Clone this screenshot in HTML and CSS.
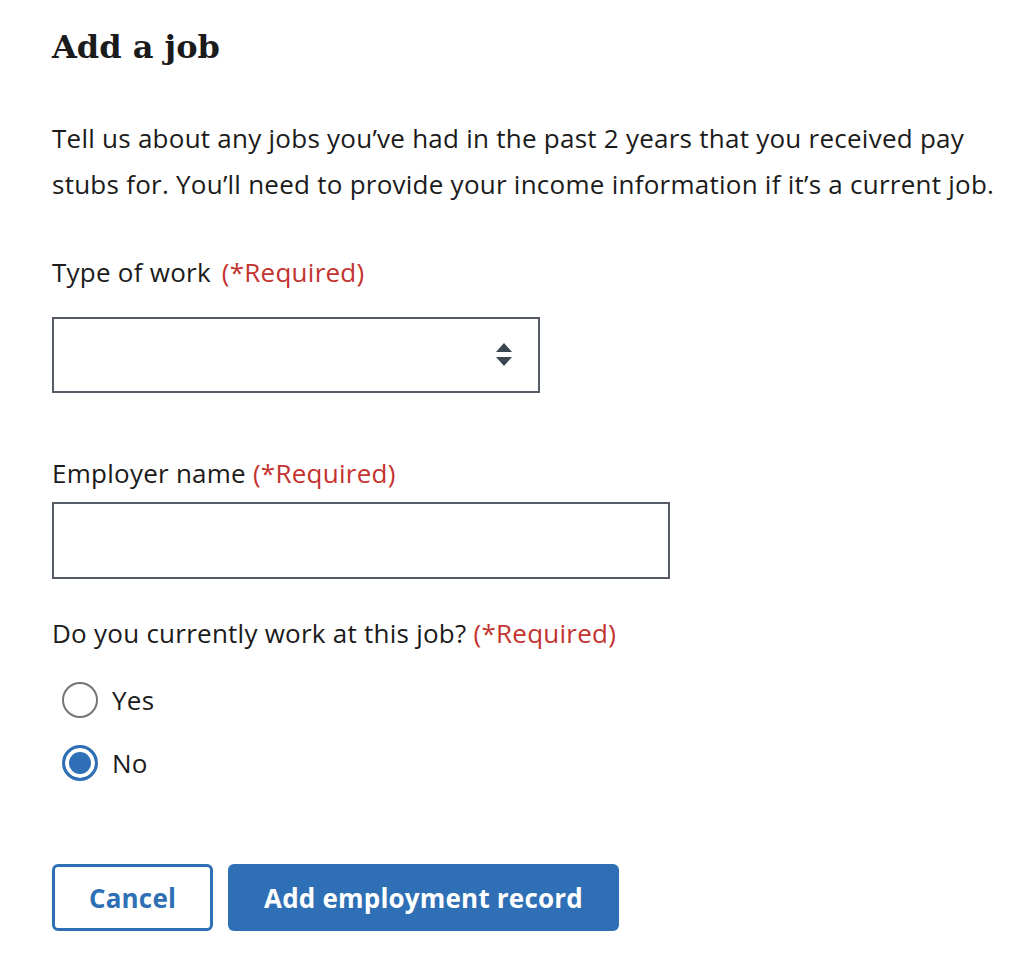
FILE: index.html
```html
<!DOCTYPE html>
<html lang="en">
<head>
<meta charset="utf-8">
<title>Add a job</title>
<link rel="stylesheet" href="styles.css">
</head>
<body>
<main class="page">
  <h1 class="title">Add a job</h1>
  <p class="intro">Tell us about any jobs you’ve had in the past 2 years that you received pay stubs for. You’ll need to provide your income information if it’s a current job.</p>

  <label class="label label-first" for="type">Type of work <span class="req req-wide">(*Required)</span></label>
  <div class="select">
    <select id="type" class="select-input"><option></option></select>
    <svg class="select-arrows" width="18" height="26" viewBox="0 0 18 26" aria-hidden="true">
      <path d="M9 1 L17 10 L1 10 Z" fill="#3d4551"/>
      <path d="M1 15 L17 15 L9 24 Z" fill="#3d4551"/>
    </svg>
  </div>

  <label class="label label-employer" for="employer">Employer name <span class="req">(*Required)</span></label>
  <input id="employer" class="text-input" type="text">

  <fieldset class="fieldset">
    <legend class="label legend">Do you currently work at this job? <span class="req">(*Required)</span></legend>
    <label class="radio">
      <span class="radio-dot"></span>
      <span class="radio-text">Yes</span>
    </label>
    <label class="radio radio-second">
      <span class="radio-dot radio-dot-checked"></span>
      <span class="radio-text">No</span>
    </label>
  </fieldset>

  <div class="actions">
    <button class="btn btn-outline" type="button">Cancel</button>
    <button class="btn btn-primary" type="button">Add employment record</button>
  </div>
</main>
</body>
</html>
```

FILE: styles.css
```css
html, body {
  margin: 0;
  padding: 0;
  background: #ffffff;
}

body {
  font-family: "Open Sans", "Lato", sans-serif;
  color: #1b1b1b;
}

.page {
  padding: 25px 0 0 52px;
}

.title {
  margin: 0;
  font-family: "DejaVu Serif", "Liberation Serif", serif;
  font-weight: 700;
  font-size: 32px;
  line-height: 44px;
  color: #1b1b1b;
}

.intro {
  margin: 46px 0 0;
  width: 960px;
  font-size: 26px;
  line-height: 46px;
  letter-spacing: 0.25px;
}

.label {
  display: block;
  font-size: 26px;
  line-height: 46px;
  letter-spacing: 0.25px;
}

.label-first {
  margin-top: 42px;
}

.req {
  color: #c3332f;
}

.req-wide {
  margin-left: 4px;
}

.select {
  position: relative;
  margin-top: 22px;
  width: 488px;
  height: 76px;
}

.select-input {
  appearance: none;
  -webkit-appearance: none;
  box-sizing: border-box;
  width: 100%;
  height: 100%;
  border: 2px solid #565c65;
  border-radius: 0;
  background: #fff;
  margin: 0;
}

.select-arrows {
  position: absolute;
  right: 27px;
  top: 25px;
  pointer-events: none;
}

.label-employer {
  margin-top: 57px;
}

.text-input {
  display: block;
  box-sizing: border-box;
  margin: 6px 0 0;
  width: 618px;
  height: 77px;
  border: 2px solid #565c65;
  border-radius: 0;
  background: #fff;
}

.fieldset {
  margin: 31px 0 0;
  padding: 0;
  border: 0;
}

.legend {
  padding: 0;
}

.radio {
  display: flex;
  align-items: center;
  gap: 14px;
  height: 46px;
  margin-top: 21px;
  margin-left: 10px;
  font-size: 26px;
  letter-spacing: 0.25px;
}

.radio-second {
  margin-top: 17px;
}

.radio-dot {
  box-sizing: border-box;
  width: 36px;
  height: 36px;
  border-radius: 50%;
  border: 2px solid #757575;
  background: #fff;
}

.radio-dot-checked {
  border: 3px solid #2f6fb5;
  background: #2f6fb5;
  box-shadow: inset 0 0 0 4px #fff;
}

.actions {
  display: flex;
  gap: 15px;
  margin-top: 78px;
}

.btn {
  box-sizing: border-box;
  height: 67px;
  border-radius: 6px;
  font-family: "Open Sans", "Lato", sans-serif;
  font-weight: 700;
  font-size: 26px;
  letter-spacing: 0.2px;
  cursor: pointer;
  margin: 0;
  padding: 0;
}

.btn-outline {
  width: 161px;
  background: #fff;
  color: #2f6fb5;
  border: 3px solid #2f6fb5;
}

.btn-primary {
  width: 391px;
  background: #2f6fb5;
  color: #fff;
  border: 0;
}
```
